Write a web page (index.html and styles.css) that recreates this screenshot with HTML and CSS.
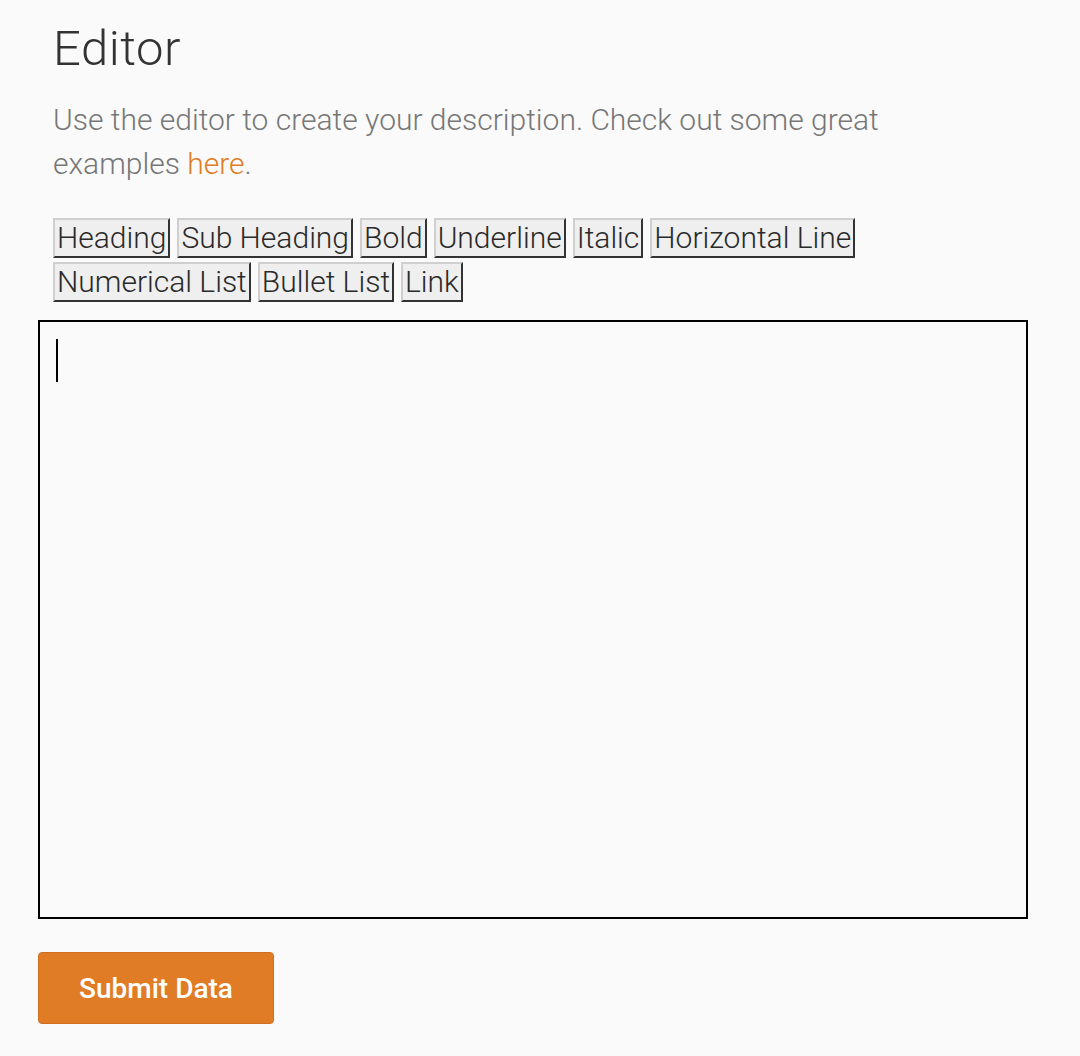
FILE: index.html
```html
<!DOCTYPE html>
<html>
<head>
<meta charset="utf-8">
<link rel="stylesheet" href="styles.css">
</head>
<body>
<main class="page">
  <section class="intro">
    <h1 class="title">Editor</h1>
    <p class="desc">Use the editor to create your description. Check out some great examples <a class="link" href="#">here</a>.</p>
    <div class="toolbar">
      <button class="tool">Heading</button>
      <button class="tool">Sub Heading</button>
      <button class="tool">Bold</button>
      <button class="tool">Underline</button>
      <button class="tool">Italic</button>
      <button class="tool">Horizontal Line</button>
      <button class="tool">Numerical List</button>
      <button class="tool">Bullet List</button>
      <button class="tool">Link</button>
    </div>
  </section>
  <div class="editor"><span class="caret"></span></div>
  <button class="submit">Submit Data</button>
</main>
</body>
</html>
```

FILE: styles.css
```css
html, body {
  margin: 0;
  padding: 0;
  background: #fafafa;
}
body {
  font-family: Roboto, "Liberation Sans", sans-serif;
  width: 1080px;
  height: 1056px;
  overflow: hidden;
}
.page {
  padding: 0 52px 0 38px;
  display: flex;
  flex-direction: column;
}
.intro {
  padding-left: 15px;
}
.title {
  margin: 22px 0 0 0;
  font-size: 49px;
  font-weight: 300;
  letter-spacing: 0.5px;
  color: #333;
  line-height: 54px;
}
.desc {
  margin: 22px 0 0 0;
  font-size: 30px;
  font-weight: 300;
  line-height: 44px;
  color: #777;
  width: 860px;
}
.link {
  color: #e07c26;
  text-decoration: none;
}
.toolbar {
  margin-top: 32px;
  display: flex;
  flex-wrap: wrap;
  column-gap: 7px;
  row-gap: 4px;
  width: 880px;
}
.tool {
  font-family: Roboto, "Liberation Sans", sans-serif;
  font-size: 30px;
  font-weight: 300;
  color: #2a2a2a;
  background: #efefef;
  border: 2px solid;
  border-color: #cfcfcf #333 #333 #cfcfcf;
  padding: 0 2px 0 2px;
  margin: 0;
  height: 40px;
  line-height: 36px;
}
.editor {
  box-sizing: border-box;
  margin-top: 18px;
  height: 599px;
  border: 2px solid #000;
  padding: 17px 16px;
}
.caret {
  display: block;
  width: 2px;
  height: 43px;
  background: #000;
}
.submit {
  align-self: flex-start;
  margin-top: 33px;
  width: 236px;
  height: 72px;
  background: #e07c26;
  border: 1px solid #d0701f;
  border-radius: 4px;
  color: #fff;
  font-family: Roboto, "Liberation Sans", sans-serif;
  font-size: 28px;
  font-weight: 500;
  padding: 0;
}
```
